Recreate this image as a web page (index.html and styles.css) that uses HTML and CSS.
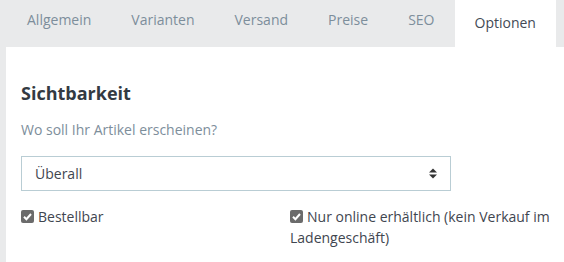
FILE: index.html
```html
<!DOCTYPE html>
<html lang="de">
<head>
<meta charset="utf-8">
<title>Optionen</title>
<link rel="stylesheet" href="styles.css">
</head>
<body>
<nav class="tabs">
  <div class="tab">Allgemein</div>
  <div class="tab">Varianten</div>
  <div class="tab">Versand</div>
  <div class="tab">Preise</div>
  <div class="tab">SEO</div>
  <div class="tab active">Optionen</div>
</nav>
<main class="panel">
  <h2 class="title">Sichtbarkeit</h2>
  <p class="hint">Wo soll Ihr Artikel erscheinen?</p>
  <div class="select">
    <span class="select-value">Überall</span>
    <svg class="select-arrow" width="8" height="11" viewBox="0 0 8 11"><path d="M0 4.5 L4 0.5 L8 4.5 Z M0 6.5 L8 6.5 L4 10.5 Z" fill="#333"/></svg>
  </div>
  <div class="options">
    <label class="option"><span class="check"><svg width="13" height="13" viewBox="0 0 13 13"><path d="M3 6.8 L5.4 9.2 L10 4" fill="none" stroke="#fff" stroke-width="2"/></svg></span>Bestellbar</label>
    <label class="option"><span class="check"><svg width="13" height="13" viewBox="0 0 13 13"><path d="M3 6.8 L5.4 9.2 L10 4" fill="none" stroke="#fff" stroke-width="2"/></svg></span>Nur online erhältlich (kein Verkauf im Ladengeschäft)</label>
  </div>
</main>
</body>
</html>
```

FILE: styles.css
```css
html, body {
  margin: 0;
  padding: 0;
}
body {
  background: #e9eaeb;
  font-family: "Open Sans", "Noto Sans", sans-serif;
  width: 564px;
  height: 262px;
  overflow: hidden;
}
.tabs {
  display: flex;
  height: 47px;
  padding-left: 7px;
}
.tab {
  padding: 10px 20px 0;
  font-size: 14px;
  line-height: 20px;
  color: #7d8e9b;
}
.tab.active {
  background: #fff;
  color: #434a55;
  padding-top: 13px;
}
.panel {
  margin-left: 6px;
  background: #fff;
  padding: 34px 5px 0 15px;
  height: 215px;
  box-sizing: border-box;
}
.title {
  margin: 0;
  font-size: 18px;
  line-height: 24px;
  font-weight: 700;
  color: #333a42;
}
.hint {
  margin: 15px 0 0;
  font-size: 14px;
  line-height: 20px;
  color: #7d8e9b;
}
.select {
  margin-top: 16px;
  width: 430px;
  height: 35px;
  box-sizing: border-box;
  border: 1px solid #b9cdd4;
  display: flex;
  align-items: center;
  justify-content: space-between;
  padding: 0 13px 0 13px;
  font-size: 14px;
  color: #3f4650;
}
.select-arrow {
  display: block;
}
.options {
  margin-top: 15px;
  display: grid;
  grid-template-columns: 269px 1fr;
}
.option {
  font-size: 14px;
  line-height: 21px;
  color: #3f4650;
}
.check {
  display: inline-block;
  width: 13px;
  height: 13px;
  border-radius: 2px;
  background: #6b6b6b;
  vertical-align: -1px;
  margin-right: 4px;
}
.check svg {
  display: block;
}
```
